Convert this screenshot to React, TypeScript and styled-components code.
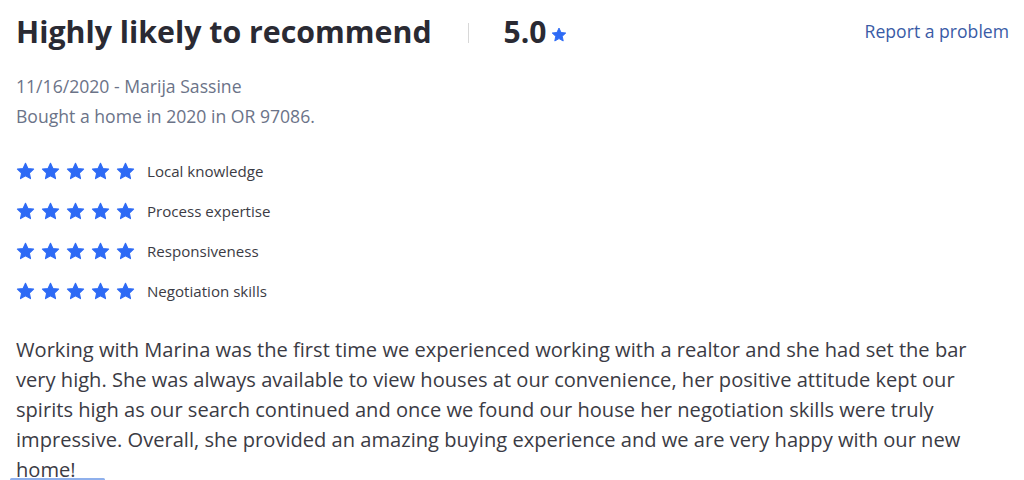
import React from "react";
import styled, { createGlobalStyle } from "styled-components";

const Global = createGlobalStyle`
  html, body { margin: 0; padding: 0; background: #fff; }
  body { font-family: "Open Sans", "Noto Sans", sans-serif; color: #2a2a33; }
`;

const Page = styled.div`
  width: 1024px;
  height: 480px;
  overflow: hidden;
  padding: 0 15px 0 16px;
  box-sizing: border-box;
`;

const Header = styled.div`
  display: flex;
  align-items: center;
  height: 62px;
`;

const Title = styled.h2`
  margin: 0;
  font-size: 30.3px;
  font-weight: 700;
  color: #2a2a33;
`;

const Divider = styled.span`
  width: 1px;
  height: 20px;
  background: #d8d8d8;
  margin: 4px 35px 0 36px;
`;

const Score = styled.span`
  font-size: 30px;
  font-weight: 700;
  color: #2a2a33;
`;

const ScoreStar = styled.span`
  display: inline-flex;
  margin: 8px 0 0 5px;
`;

const Report = styled.a`
  margin-left: auto;
  font-size: 17.6px;
  color: #3a5ba6;
  text-decoration: none;
  margin-top: -1px;
`;

const Meta = styled.div`
  margin-top: 9px;
  font-size: 17.6px;
  line-height: 30px;
  color: #6b7388;
`;

const Ratings = styled.div`
  display: flex;
  flex-direction: column;
  gap: 16px;
  margin-top: 28px;
`;

const RatingRow = styled.div`
  display: flex;
  align-items: center;
  height: 24px;
`;

const Stars = styled.div`
  display: flex;
  gap: 6px;
  margin-right: 12px;
`;

const Label = styled.span`
  font-size: 15.1px;
  color: #3b3b44;
`;

const Body = styled.p`
  margin: 32px 0 0;
  font-size: 20.1px;
  line-height: 30px;
  color: #3b3b44;
  max-width: 985px;
`;

const Underline = styled.div`
  width: 95px;
  height: 3px;
  background: #8fb0ec;
  margin: -7px 0 0 -6px;
  border-radius: 2px;
`;

const Star: React.FC<{ size: number }> = ({ size }) => (
  <svg width={size} height={size} viewBox="0 0 24 24">
    <path
      d="M12 1.6l3.05 6.55 7.15.85-5.3 4.9 1.42 7.08L12 17.4l-6.32 3.58 1.42-7.08-5.3-4.9 7.15-.85z"
      fill="#2d6af5"
      stroke="#2d6af5"
      strokeWidth="1.4"
      strokeLinejoin="round"
    />
  </svg>
);

const ratings = ["Local knowledge", "Process expertise", "Responsiveness", "Negotiation skills"];

export default function App() {
  return (
    <Page>
      <Global />
      <Header>
        <Title>Highly likely to recommend</Title>
        <Divider />
        <Score>5.0</Score>
        <ScoreStar>
          <Star size={16} />
        </ScoreStar>
        <Report href="#">Report a problem</Report>
      </Header>
      <Meta>
        11/16/2020 - Marija Sassine
        <br />
        Bought a home in 2020 in OR 97086.
      </Meta>
      <Ratings>
        {ratings.map((r) => (
          <RatingRow key={r}>
            <Stars>
              {[0, 1, 2, 3, 4].map((i) => (
                <Star key={i} size={19} />
              ))}
            </Stars>
            <Label>{r}</Label>
          </RatingRow>
        ))}
      </Ratings>
      <Body>
        Working with Marina was the first time we experienced working with a realtor and she had set the bar very
        high. She was always available to view houses at our convenience, her positive attitude kept our spirits
        high as our search continued and once we found our house her negotiation skills were truly impressive.
        Overall, she provided an amazing buying experience and we are very happy with our new home!
      </Body>
      <Underline />
    </Page>
  );
}
